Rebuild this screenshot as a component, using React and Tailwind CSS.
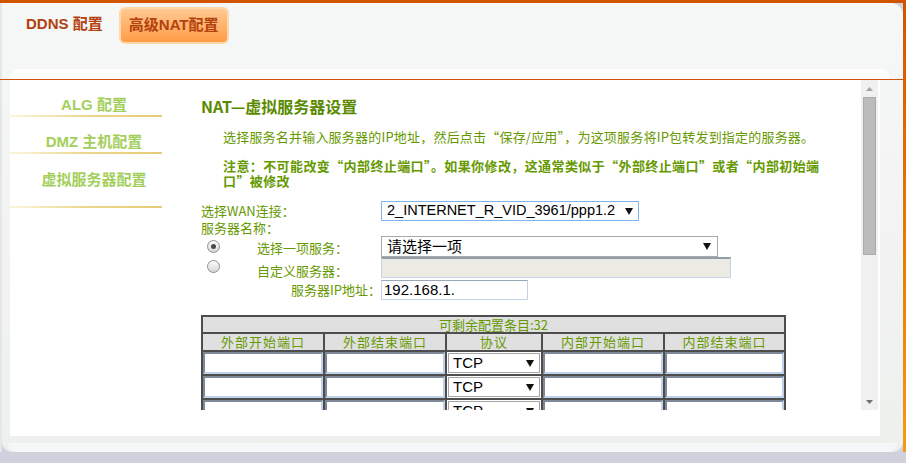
import React from 'react';

const cjk = "font-['Noto_Sans_CJK_SC','Noto_Sans',sans-serif]";
const arial = "font-['Liberation_Sans','Noto_Sans_CJK_SC',Arial,sans-serif]";

function Arrow() {
  return (
    <svg width="8" height="7" viewBox="0 0 8 7">
      <path d="M0 0h8L4 7z" fill="#111" />
    </svg>
  );
}

function Radio({ checked }) {
  return (
    <div className="w-[13px] h-[13px] rounded-full border border-[#8e8f8f] bg-linear-to-b from-[#fdfdfd] to-[#d6d6d6] flex items-center justify-center">
      {checked && <div className="w-[5px] h-[5px] rounded-full bg-[#4a4a4a]" />}
    </div>
  );
}

function SideItem({ label, pt, pb }) {
  return (
    <>
      <div className={`${pt} ${pb} text-center pl-[16px] text-[15px] leading-[20px] font-bold text-[#a3cf5b] [text-shadow:0_0_2px_#ffffff] ${arial}`}>
        {label}
      </div>
      <div className="h-[2px] bg-linear-to-r from-[#faf5df] via-[#ecd78c] to-[#e6cd74]" />
    </>
  );
}

function PortInput() {
  return <div className="h-[22px] bg-white border-2 border-t-[#7f8898] border-l-[#7f8898] border-b-[#c0d2ea] border-r-[#c0d2ea]" />;
}

function ProtoSelect() {
  return (
    <div className="h-[22px] bg-white p-[1px]">
      <div className={`h-full border border-[#a6a6a6] flex items-center justify-between pl-[4px] pr-[5px] text-[15px] text-black ${arial}`}>
        <span>TCP</span>
        <Arrow />
      </div>
    </div>
  );
}

const headers = ['外部开始端口', '外部结束端口', '协议', '内部开始端口', '内部结束端口'];

function App() {
  return (
    <div className="relative w-[906px] h-[463px] overflow-hidden bg-[#d1d1dd]">
      <div className="h-[3px] bg-[#d35400]" />
      <div className="flex h-[449px]">
        <div className="w-[2px] bg-[#e2e7ec]" />
        <div className="w-[901px] rounded-tr-[12px] rounded-bl-[10px] rounded-br-[10px] bg-linear-to-b from-[#f6f7f7] to-[#eef0ee] flex flex-col">
          {/* tabs */}
          <div className="h-[66px] flex items-start">
            <div className={`ml-[24px] mt-[11px] text-[15px] leading-[20px] font-bold text-[#b3410e] ${arial}`}>DDNS 配置</div>
            <div className="ml-[16px] mt-[4px] w-[110px] h-[37px] rounded-[6px] border-2 border-[#ffd7ad] bg-linear-to-b from-[#ffc990] to-[#ff9c44] flex items-center justify-center">
              <span className={`text-[15px] font-bold text-[#b3410e] ${arial}`}>高级NAT配置</span>
            </div>
          </div>

          {/* card */}
          <div className="ml-[8px] w-[880px] flex flex-col">
            <div className="h-[11px] bg-white rounded-t-[10px]" />
            <div className="flex h-[356px]">
              <div className="w-[870px] bg-white flex">
                {/* sidebar */}
                <div className="w-[152px] flex flex-col">
                  <SideItem label="ALG 配置" pt="pt-[15px]" pb="pb-0" />
                  <SideItem label="DMZ 主机配置" pt="pt-[15px]" pb="pb-0" />
                  <SideItem label="虚拟服务器配置" pt="pt-[16px]" pb="pb-[16px]" />
                </div>
                <div className="w-[18px]" />

                {/* main scroll area */}
                <div className="flex flex-col">
                  <div className="flex h-[330px]">
                    <div className={`w-[681px] h-[330px] overflow-hidden pl-[21px] text-[#669900] ${cjk}`}>
                      <div className="mt-[16px] text-[16px] leading-[20px] font-bold text-[#5b8a00]">NAT—虚拟服务器设置</div>
                      <div className="mt-[13px] ml-[22px] text-[13px] leading-[15px] tracking-[0.2px] whitespace-nowrap">
                        选择服务名并输入服务器的IP地址，然后点击“保存/应用”，为这项服务将IP包转发到指定的服务器。
                      </div>
                      <div className="mt-[14px] ml-[22px] text-[13px] leading-[15px] tracking-[0.4px] font-bold whitespace-nowrap">
                        注意：不可能改变“内部终止端口”。如果你修改，这通常类似于“外部终止端口”或者“内部初始端
                        <br />
                        口”被修改
                      </div>

                      <div className="mt-[13px] text-[13px]">
                        <div className="flex h-[20px] items-center">
                          <div className="w-[180px]">选择WAN连接：</div>
                          <div className={`w-[258px] h-[20px] border border-[#7eb4ea] flex items-center justify-between pl-[5px] pr-[5px] text-[14.5px] text-black ${arial}`}>
                            <span>2_INTERNET_R_VID_3961/ppp1.2</span>
                            <Arrow />
                          </div>
                        </div>
                        <div className="h-[14px] leading-[14px]">服务器名称：</div>
                        <div className="flex h-[22px] items-center">
                          <div className="w-[180px] flex items-center">
                            <div className="ml-[6px]">
                              <Radio checked />
                            </div>
                            <span className="ml-[37px] mt-[3px]">选择一项服务：</span>
                          </div>
                          <div className={`w-[337px] h-[21px] border border-[#a9a9a9] flex items-center justify-between pl-[5px] pr-[6px] text-[15px] text-black ${cjk}`}>
                            <span>请选择一项</span>
                            <Arrow />
                          </div>
                        </div>
                        <div className="flex h-[22px] items-start">
                          <div className="w-[180px] h-[22px] flex items-center">
                            <div className="ml-[6px] -mt-[3px]">
                              <Radio />
                            </div>
                            <span className="ml-[37px] mt-[6px]">自定义服务器：</span>
                          </div>
                          <div className="w-[350px] h-[21px] bg-[#ebebe4] border border-[#c3d4ea] border-t-2 border-t-[#919cab]" />
                        </div>
                        <div className="flex h-[22px] items-center">
                          <div className="w-[180px] text-right">服务器IP地址：</div>
                          <div className={`w-[147px] h-[20px] border border-[#c3d4ea] border-t-[#9aa7b8] flex items-center pl-[2px] text-[15px] text-black ${arial}`}>
                            192.168.1.
                          </div>
                        </div>
                      </div>

                      <div className="mt-[14px] w-[585px] bg-[#4d4d4d] p-[2px] grid grid-cols-[120px_120px_94px_120px_119px] gap-[2px] text-[13px]">
                        <div className="col-span-5 h-[15px] leading-[15px] bg-[#e0e0e0] text-center">可剩余配置条目:32</div>
                        {headers.map((h) => (
                          <div key={h} className="h-[16px] leading-[16px] bg-[#e0e0e0] text-center tracking-[1px]">{h}</div>
                        ))}
                        {[0, 1, 2, 3].map((r) => (
                          <React.Fragment key={r}>
                            <PortInput />
                            <PortInput />
                            <ProtoSelect />
                            <PortInput />
                            <PortInput />
                          </React.Fragment>
                        ))}
                      </div>
                    </div>

                    {/* scrollbar */}
                    <div className="w-[17px] h-[330px] bg-[#f0f0f0] flex flex-col items-center">
                      <div className="h-[17px] flex items-center justify-center">
                        <svg width="7" height="4" viewBox="0 0 7 4">
                          <path d="M0 4L3.5 0L7 4z" fill="#a3a3a3" />
                        </svg>
                      </div>
                      <div className="w-[13px] h-[158px] bg-[#bcbcbc] border border-[#ababab]" />
                      <div className="flex-1" />
                      <div className="h-[17px] flex items-center justify-center">
                        <svg width="7" height="4" viewBox="0 0 7 4">
                          <path d="M0 0L3.5 4L7 0z" fill="#6f6f6f" />
                        </svg>
                      </div>
                    </div>
                  </div>
                </div>
              </div>
              <div className="w-[10px]" />
            </div>
          </div>
          <div className="flex-1" />
          <div className="h-[9px] mx-[6px] rounded-b-[10px] bg-[#f5f6f7]" />
        </div>
        <div className="w-[3px] bg-linear-to-b from-[#d35400] to-[#f39c12]" />
      </div>

      {/* orange rule across the content frame */}
      <div className="absolute top-[79px] left-0 w-[903px] h-px bg-[#d4520c]" />
    </div>
  );
}

export default App;
